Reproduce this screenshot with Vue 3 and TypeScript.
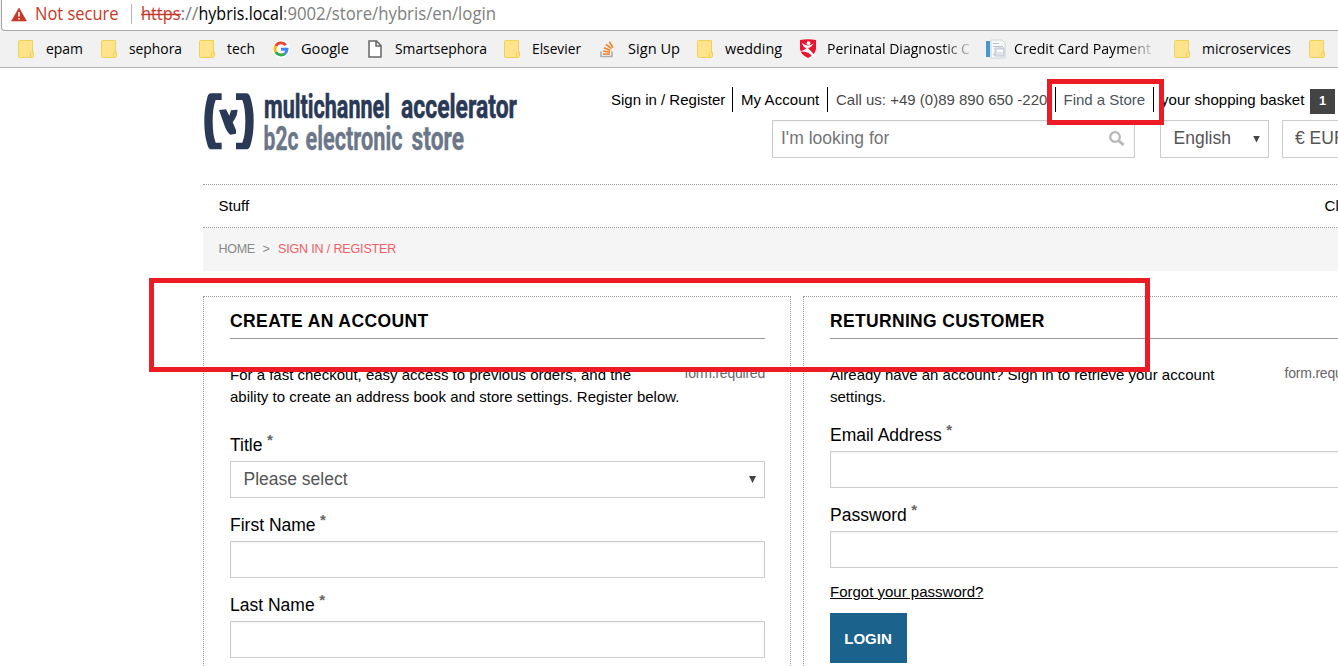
<script setup lang="ts">
interface Bookmark { name: string; icon: string; slot: number; width: number; fade?: boolean }

const bookmarks: Bookmark[] = [
  { name: 'epam', icon: 'folder', slot: 83, width: 37 },
  { name: 'sephora', icon: 'folder', slot: 98, width: 53 },
  { name: 'tech', icon: 'folder', slot: 74, width: 28 },
  { name: 'Google', icon: 'google', slot: 94, width: 48 },
  { name: 'Smartsephora', icon: 'page', slot: 137, width: 92 },
  { name: 'Elsevier', icon: 'folder', slot: 96, width: 49 },
  { name: 'Sign Up', icon: 'stack', slot: 97, width: 52 },
  { name: 'wedding', icon: 'folder', slot: 102, width: 57 },
  { name: 'Perinatal Diagnostic C', icon: 'shield', slot: 187, width: 143, fade: true },
  { name: 'Credit Card Payment', icon: 'card', slot: 188, width: 137, fade: true },
  { name: 'microservices', icon: 'folder', slot: 135, width: 89 },
  { name: '', icon: 'folder', slot: 40, width: 0 },
]
</script>

<template>
  <div class="window">
    <header class="chrome">
      <div class="omnibox">
        <svg class="address" width="520" height="30">
          <path d="M19 8 L26.5 21 H11.5 Z" fill="#c53929" stroke="#c53929" stroke-linejoin="round" stroke-width=".6" />
          <path d="M19 12v4.5M19 18v1.6" stroke="#fff" stroke-width="1.6" />
          <text x="35" y="20" textLength="83.5" lengthAdjust="spacingAndGlyphs" fill="#c53929">Not secure</text>
          <path d="M131.500 4V24" stroke="#b4b4b4" />
          <text x="141" y="20" textLength="39.500" lengthAdjust="spacingAndGlyphs" fill="#c53929">https</text>
          <path d="M141 14.500H181" stroke="#c53929" stroke-width="1.300" />
          <text x="180.500" y="20" textLength="18" lengthAdjust="spacingAndGlyphs" fill="#808080">://</text>
          <text x="198.500" y="20" textLength="84.500" lengthAdjust="spacingAndGlyphs" fill="#000">hybris.local</text>
          <text x="283" y="20" textLength="213" lengthAdjust="spacingAndGlyphs" fill="#808080">:9002/store/hybris/en/login</text>
        </svg>
      </div>
      <nav class="bookmarks">
        <div v-for="(b, i) in bookmarks" :key="i" class="bookmark" :style="{ width: b.slot + 'px' }">
          <svg class="icon" width="28" height="24" viewBox="0 0 28 24">
            <g v-if="b.icon === 'folder'" stroke="#eed05a">
              <path d="M1.500 3.500H14.500V15H15.500V19.500Q15 20.500 14 20.500H1.500Q.5 20.500.5 19V4.500Q.5 3.500 1.500 3.500Z" fill="#ffe48c" />
              <path d="M12.500 20.500V16Q13 15 15 15" fill="none" />
            </g>
            <g v-else-if="b.icon === 'google'" fill="none" stroke-width="2.900">
              <circle cx="8" cy="12" r="9" fill="#fff" />
              <path d="M12.800 8.200A6 6 0 0 0 2.800 9" stroke="#ea4335" />
              <path d="M2.800 9A6 6 0 0 0 2.800 15" stroke="#fbbc05" />
              <path d="M2.800 15A6 6 0 0 0 12 16.500" stroke="#34a853" />
              <path d="M8 12.200H14Q14 15 12 16.500" stroke="#4285f4" />
            </g>
            <path v-else-if="b.icon === 'page'" d="M2 4H9.500L14 8.500V20H2ZM9 4V9H14" fill="#fff" stroke="#656565" stroke-width="1.500" />
            <g v-else-if="b.icon === 'stack'" fill="none" stroke-width="1.600">
              <path d="M1 14.500V19.500H12V14.500" stroke="#a9afb6" />
              <path d="M3 17H10M3.200 14L10 15.300M4 10.800L10.500 13.600M6 7.300L11.500 11.700M9.300 4.800L13 10.500" stroke="#f48024" />
            </g>
            <g v-else-if="b.icon === 'shield'">
              <path d="M1 3Q9 1.600 17 3V12Q16 18 9 21Q2 18 1 12Z" fill="#e91530" />
              <circle cx="9.500" cy="6.200" r="1.900" fill="#fff" />
              <path d="M3 6Q8 10.500 15 6.500Q11 11 9 11L16.500 19L14.500 21Q9 13 0 15Q5 13 7.500 11.500Q4 10 3 6Z" fill="#fff" />
            </g>
            <g v-else>
              <path d="M5 3H16L19 6V21H5Z" fill="#f9fafb" stroke="#ced3da" />
              <rect x="0" y="4" width="4" height="16" fill="#4698ce" />
              <path d="M7 6.500H13M7 9.500H17M7 17.500H11" stroke="#bcc3ce" />
              <path d="M9 11H18V19H9Z" fill="#dfe3e9" stroke="#bcc4cf" />
              <path d="M11 14H17" stroke="#fff" stroke-width="2" />
            </g>
          </svg>
          <svg v-if="b.name" :class="['label', { fade: b.fade }]" :width="b.width" height="24">
            <text x="0" y="17" :textLength="b.width" lengthAdjust="spacingAndGlyphs">{{ b.name }}</text>
          </svg>
        </div>
      </nav>
    </header>

    <main class="store">
      <div class="masthead">
        <svg class="logo" width="320" height="68" viewBox="0 0 320 68">
          <g transform="translate(-8 -10) scale(.33333)" fill="#293956">
            <path d="M80 40H48Q40 40 37 52Q27 90 28 130Q28 166 38 197Q41 208 50 208H80V188H62Q53 166 53 124Q53 82 62 60H80Z" />
            <path d="M123 40H154Q162 40 166 52Q177 88 176 125Q176 164 166 197Q163 208 153 208H123V188H142Q151 166 151 124Q151 82 142 60H123Z" />
            <path d="M72 90L93 88L103 107L108 91L128 89Q127 104 120 116L113 127L123 150V161L106 164Q99 160 91 143Z" />
          </g>
          <g class="logo-main">
            <text x="61" y="27.500" textLength="126" lengthAdjust="spacingAndGlyphs">multichannel</text>
            <text x="198" y="27.500" textLength="116" lengthAdjust="spacingAndGlyphs">accelerator</text>
          </g>
          <g class="logo-sub">
            <text x="60.500" y="59.500" textLength="35" lengthAdjust="spacingAndGlyphs">b2c</text>
            <text x="102.500" y="59.500" textLength="97" lengthAdjust="spacingAndGlyphs">electronic</text>
            <text x="208.500" y="59.500" textLength="52.500" lengthAdjust="spacingAndGlyphs">store</text>
          </g>
        </svg>
        <div class="tools">
          <div class="links">
            <a class="link signin">Sign in / Register</a>
            <a class="link account">My Account</a>
            <span class="link phone">Call us: +49 (0)89 890 650 -220</span>
            <a class="link finder">Find a Store</a>
            <a class="basket">your shopping basket</a>
            <span class="count">1</span>
          </div>
          <div class="controls">
            <div class="search">
              <span>I'm looking for</span>
              <svg width="18" height="18" viewBox="0 0 18 18" fill="none" stroke="#b8b8b8">
                <circle cx="7" cy="7" r="4.800" stroke-width="2.300" /><path d="M10.500 10.500L15.500 15" stroke-width="3" />
              </svg>
            </div>
            <div class="select language"><span>English</span><i class="arrow"></i></div>
            <div class="select currency"><span>€ EUR</span></div>
          </div>
        </div>
      </div>
      <nav class="menu"><span>Stuff</span><span class="menu-last">Clothes</span></nav>
      <div class="crumbs"><span>HOME</span><span class="gt">&gt;</span><span class="current">SIGN IN / REGISTER</span></div>
      <div class="panels">
        <section class="panel">
          <h2>CREATE AN ACCOUNT</h2>
          <div class="intro">
            <p>For a fast checkout, easy access to previous orders, and the<br>ability to create an address book and store settings. Register below.</p>
            <span class="required">form.required</span>
          </div>
          <div class="field first"><label>Title<sup>*</sup></label><div class="box choose"><span>Please select</span><i class="arrow"></i></div></div>
          <div class="field"><label>First Name<sup>*</sup></label><div class="box entry"></div></div>
          <div class="field"><label>Last Name<sup>*</sup></label><div class="box entry"></div></div>
        </section>
        <section class="panel returning">
          <h2>RETURNING CUSTOMER</h2>
          <div class="intro">
            <p>Already have an account? Sign in to retrieve your account<br>settings.</p>
            <span class="required">form.required</span>
          </div>
          <div class="field"><label>Email Address<sup>*</sup></label><div class="box entry"></div></div>
          <div class="field"><label>Password<sup>*</sup></label><div class="box entry"></div></div>
          <a class="forgot">Forgot your password?</a>
          <button class="login">LOGIN</button>
        </section>
      </div>
    </main>
    <div class="mark mark-store"></div>
    <div class="mark mark-titles"></div>
  </div>
</template>

<style>
html, body { margin: 0; overflow: hidden; }
</style>

<style scoped>
* { box-sizing: border-box; }
.window { position: relative; width: 1338px; height: 666px; overflow: hidden; background: #fff; font-family: "Liberation Sans", Arial, sans-serif; font-size: 15px; color: #000; white-space: nowrap; }
svg { display: block; flex: none; }
.chrome { height: 68px; background: #f1f1f1; border-bottom: 1px solid #b6b6b6; }
.omnibox { height: 31px; margin-left: 1px; margin-right: -5px; background: #fff; border: 1px solid #a5a5a5; border-top: 0; border-radius: 0 0 0 4px; }
.address { margin-left: -2px; font: 18px "Open Sans", sans-serif; }
.bookmarks { display: flex; padding: 6px 0 0 18px; }
.bookmark { display: flex; flex: none; }
.label { font: 14.2px "Open Sans", sans-serif; overflow: visible; }
.fade { -webkit-mask-image: linear-gradient(to right, #000 calc(100% - 28px), transparent); mask-image: linear-gradient(to right, #000 calc(100% - 28px), transparent 104%); }
.store { margin-left: 203px; width: 1188px; }
.masthead { display: flex; height: 116px; }
.logo { margin-top: 22px; }
.logo text { font: 700 33.5px Roboto, sans-serif; }
.logo-main { fill: #293956; stroke: #293956; stroke-width: .6; }
.logo-sub { fill: #6b7689; stroke: #6b7689; stroke-width: .4; }
.tools { width: 865px; padding: 19px 0 0 88px; }
.links { display: flex; height: 25px; line-height: 26px; }
.link { border-right: 1px solid #000; flex: none; }
.signin { width: 122px; }
.account { width: 95px; padding-left: 8px; letter-spacing: .08px; }
.phone { width: 228px; padding-left: 8px; color: #4a4a4a; }
.finder { width: 98px; padding-left: 7.5px; color: #4a5560; }
.basket { width: 156px; padding-left: 7px; flex: none; letter-spacing: .04px; }
.count { width: 25px; height: 25px; margin-top: 2px; background: #444; color: #fff; font-size: 13px; font-weight: 700; line-height: 24px; text-align: center; }
.controls { display: flex; margin: 8px 0 0 161px; height: 38px; font-size: 17.5px; color: #555; }
.search, .select { border: 1px solid #ccc; flex: none; display: flex; line-height: 35px; }
.search { width: 363px; padding: 0 8px; justify-content: space-between; align-items: center; color: #757575; box-shadow: inset 0 1px 2px #f0f0f0; }
.search span { height: 36px; }
.language { width: 109px; margin-left: 25px; padding: 0 8px 0 12.5px; justify-content: space-between; align-items: center; }
.select span { height: 36px; }
.currency { width: 130px; margin-left: 13px; padding-left: 12px; }
.arrow { width: 7px; height: 7px; background: #444; clip-path: polygon(0 0, 100% 0, 50% 100%); }
.menu { height: 44px; border-top: 1px dotted #999; border-bottom: 1px dotted #999; padding-left: 15.5px; line-height: 42px; display: flex; }
.menu-last { margin-left: 1075.5px; }
.crumbs { height: 43px; background: #f5f5f5; padding-left: 15.5px; display: flex; line-height: 42px; font-size: 12.5px; color: #888; }
.crumbs > span:first-child { width: 44px; letter-spacing: -.3px; }
.gt { width: 15.5px; }
.current { color: #ee5f68; letter-spacing: -.15px; }
.panels { display: flex; gap: 12px; margin-top: 25px; }
.panel { width: 588px; height: 390px; flex: none; border: 1px dotted #999; padding: 0 25px 0 26px; }
h2 { margin: 0; height: 42px; border-bottom: 1px solid #999; font-size: 17.5px; line-height: 48px; letter-spacing: .4px; }
.returning h2 { letter-spacing: .33px; }
.intro { display: flex; justify-content: space-between; margin-top: 25px; height: 44px; line-height: 22px; }
.intro p { margin: 0; }
.required { font-size: 14px; color: #666; line-height: 19px; letter-spacing: -.22px; }
.field { height: 80px; padding-top: 16px; font-size: 17.5px; }
.field.first { margin-top: 10px; }
label { display: flex; height: 27px; line-height: 23px; }
sup { margin-left: 4.5px; font-size: 15px; line-height: 12px; font-weight: 700; color: #666; }
.box { height: 37px; border: 1px solid #ccc; }
.entry { box-shadow: inset 0 1px 2px #f0f0f0; }
.choose { display: flex; justify-content: space-between; align-items: center; padding: 0 8px 0 12.5px; color: #555; line-height: 35px; }
.forgot { display: block; width: max-content; margin-top: 11px; height: 34px; line-height: 25px; text-decoration: underline; }
.login { display: block; width: 77px; height: 50px; border: 0; padding: 0 1px 0 0; background: #1b628d; color: #fff; font: 700 15px "Liberation Sans", sans-serif; }
.mark { position: absolute; border: 5px solid #ed1c24; }
.mark-store { left: 1047px; top: 79px; width: 117px; height: 46px; }
.mark-titles { left: 149px; top: 278px; width: 1001px; height: 94px; }
</style>
